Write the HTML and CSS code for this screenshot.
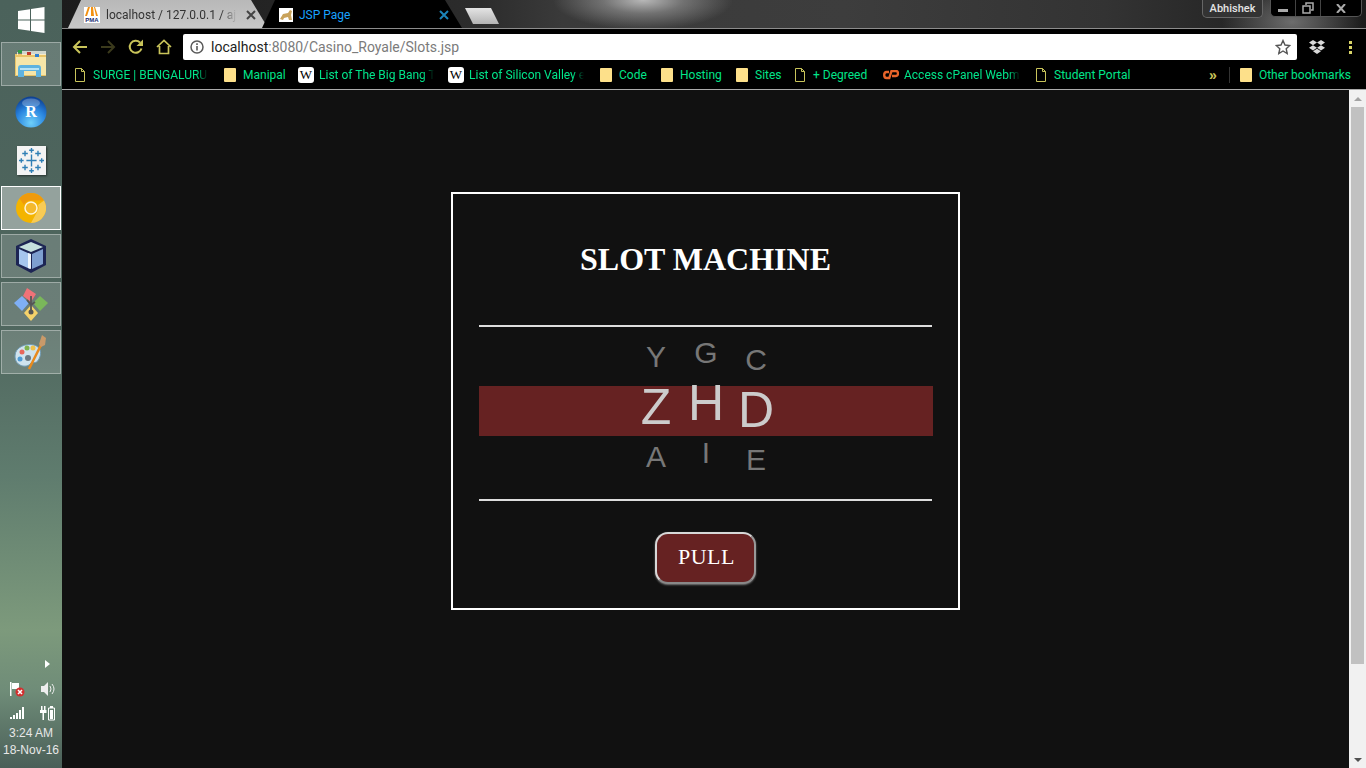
FILE: index.html
```html
<!DOCTYPE html>
<html lang="en">
<head>
<meta charset="utf-8">
<title>JSP Page</title>
<link rel="stylesheet" href="styles.css">
</head>
<body>
<aside class="taskbar">
  <div class="start">
    <svg width="27" height="26" viewBox="0 0 27 26"><path fill="#fff" d="M0 4 12 2.300V12.500H0ZM13 2.100 26.500 0V12.500H13ZM0 13.500H12V23.700L0 22ZM13 13.500H26.500V26L13 23.900Z"/></svg>
  </div>
  <div class="apps">
    <div class="app pinned">
      <svg width="34" height="30" viewBox="0 0 34 30"><path fill="#e9c467" d="M1 5h31v22H1z"/><path fill="#f7e6a8" d="M2 8h30v18H2z"/><path fill="#fdfdf2" d="M3 3h1v3H3zM8 2h24v4H8z" opacity=".7"/><path fill="#2f9e44" d="M4 1h4v3H4z"/><path fill="#c0392b" d="M13 3h4v3h-4z"/><path fill="#2f7fd0" d="M21 5h4v3h-4z"/><path fill="#5fb3e0" d="M4 26V19Q4 16 7 16H24Q27 16 27 19V28H22V22H10V28H4Z"/><path fill="#b8e3f5" d="M6 19h19v2H6z"/></svg>
    </div>
    <div class="app">
      <svg width="32" height="32" viewBox="0 0 32 32"><defs><radialGradient id="rb" cx=".5" cy=".85" r=".85"><stop offset="0" stop-color="#6fd0fa"/><stop offset=".55" stop-color="#2a86e0"/><stop offset="1" stop-color="#0c3d90"/></radialGradient></defs><circle cx="16" cy="16" r="15.500" fill="url(#rb)"/><ellipse cx="16" cy="7" rx="9" ry="4.500" fill="#fff" opacity=".25"/><text x="16" y="21" class="r-mark">R</text></svg>
    </div>
    <div class="app">
      <div class="tableau">
        <svg width="25" height="25" viewBox="0 0 27 27"><path stroke="#2f7fb5" stroke-width="1.500" fill="none" d="M13.500 7v13M8 13.500h11M13.500 0v5M11 2.500h5M13.500 22v5M11 24.500h5M0 13.500h5M2.500 11v5M22 13.500h5M24.500 11v5M6.500 3v6M3.500 6h6M20.500 3v6M17.500 6h6M6.500 18v6M3.500 21h6M20.500 18v6M17.500 21h6"/></svg>
      </div>
    </div>
    <div class="app active">
      <svg width="30" height="30" viewBox="0 0 30 30"><circle cx="15" cy="15" r="15" fill="#f4b400"/><path fill="#ef9a0c" d="M15 0A15 15 0 0 1 28 7.500H15A7.500 7.500 0 0 0 8 12L3.500 5.500A15 15 0 0 1 15 0Z"/><path fill="#f8cb55" d="M28 7.500A15 15 0 0 1 15 30L21 19A7 7 0 0 0 22 12Z"/><circle cx="15" cy="15" r="6" fill="#f4b92c" stroke="#fff6dc" stroke-width="1.500"/></svg>
    </div>
    <div class="app pinned">
      <svg width="32" height="34" viewBox="0 0 32 34"><path fill="#1d2554" d="M16 0 31 7V26L16 34 1 26V7Z"/><path fill="#c6e0de" d="M16 3 28 8 16 13 4 8Z"/><path fill="#a6c6ee" d="M4 10 15 15V30L4 25Z"/><path fill="#7e9fd0" d="M17 15 28 10V25L17 30Z"/><path fill="#eef5fb" d="M13 14 16 15V30L13 29Z"/></svg>
    </div>
    <div class="app pinned">
      <svg width="34" height="34" viewBox="0 0 34 34"><path fill="#ef7278" d="M13 1 22 7 17 15 9 9Z"/><path fill="#7faff5" d="M8 9 15 16 8 24 0 16Z"/><path fill="#7ab75a" d="M26 9 34 16 26 24 19 16Z"/><path fill="#f5d26a" d="M17 18 24 26 17 34 10 26Z"/><path fill="none" stroke="#555" stroke-width="1.800" d="M17 9V24M13 13 17 18 21 15"/><circle cx="17" cy="25" r="2.500" fill="#555"/></svg>
    </div>
    <div class="app pinned">
      <svg width="34" height="36" viewBox="0 0 34 36"><path fill="#cfe3ee" stroke="#6f9ab3" d="M1 22C1 13 12 9 20 11 27 13 28 19 25 25 22 31 18 27 16 30 13 34 1 33 1 22Z"/><circle cx="8" cy="18" r="2.500" fill="#e8665c"/><circle cx="13" cy="14" r="2.500" fill="#7fb34f"/><circle cx="19" cy="14" r="2.500" fill="#f0c24b"/><circle cx="14" cy="24" r="3" fill="#6b7a84"/><circle cx="6" cy="25" r="2.500" fill="#4f9bd6"/><path stroke="#e88a1e" stroke-width="2.500" d="M15 35 27 11"/><path fill="#c99a6a" d="M25 10 28 1 32 4 31 11 27 13Z"/></svg>
    </div>
  </div>
  <div class="tray">
    <div class="tray-arrow"></div>
    <div class="tray-row">
      <svg width="16" height="16" viewBox="0 0 16 16"><path fill="#fff" d="M1 1h1.500v14H1zM3 2h7v6H3z"/><circle cx="11" cy="11" r="4.500" fill="#d32f2f"/><path stroke="#fff" stroke-width="1.500" d="M9 9l4 4M13 9l-4 4"/></svg>
      <svg width="16" height="16" viewBox="0 0 16 16"><path fill="#eee" d="M1 5h3l4-4v14l-4-4H1z"/><path fill="none" stroke="#eee" d="M10 5q2 3 0 6M12 3q4 5 0 10"/></svg>
    </div>
    <div class="tray-row">
      <svg width="16" height="14" viewBox="0 0 16 14"><path fill="#fff" d="M1 11h2v2H1zM4 9h2v4H4zM7 7h2v6H7zM10 4h2v9h-2zM13 1h2v12h-2z"/></svg>
      <svg width="16" height="16" viewBox="0 0 16 16"><path fill="#fff" d="M1 1h1.500v4H1zM4 1h1.500v4H4zM0 5h6.500v3H0zM2.500 8h1.500v7H2.500z"/><path fill="none" stroke="#fff" d="M8.500 3h6v12h-6z"/><path fill="#fff" d="M10 1h3v2h-3zM10 5h3v9h-3z"/></svg>
    </div>
    <div class="clock">3:24 AM</div>
    <div class="clock">18-Nov-16</div>
  </div>
</aside>

<div class="browser">
  <header class="tabstrip">
    <div class="tab inactive">
      <svg class="favicon" width="16" height="16" viewBox="0 0 16 16"><path fill="#fff" d="M0 0h16v16H0z"/><path fill="#f29111" d="M4 0h2L3 9H1zM7 0h2l1 9H7zM11 0l3 9h-2L10 0z"/><text x="8" y="15" class="pma">PMA</text></svg>
      <span class="tab-title fade">localhost / 127.0.0.1 / ajp</span>
      <svg class="tab-x" width="10" height="10" viewBox="0 0 10 10"><path stroke="#444" stroke-width="2" d="M1 1l8 8M9 1l-8 8"/></svg>
    </div>
    <div class="tab current">
      <svg class="favicon" width="14" height="14" viewBox="0 0 14 14"><path fill="#fff" d="M0 0h14v14H0z"/><path fill="#c9a25a" d="M1 11 4 6 9 5 11 2 13 3 12 7 13 12H10L9 9 5 10 4 12Z"/></svg>
      <span class="tab-title">JSP Page</span>
      <svg class="tab-x" width="10" height="10" viewBox="0 0 10 10"><path stroke="#1b84b8" stroke-width="2" d="M1 1l8 8M9 1l-8 8"/></svg>
    </div>
    <div class="newtab"></div>
    <div class="window-area">
      <div class="profile">Abhishek</div>
      <div class="winbtns">
        <div class="winbtn min"><span class="min-bar"></span></div>
        <div class="winbtn max"><svg width="12" height="12" viewBox="0 0 12 12"><path fill="none" stroke="#aaa" stroke-width="1.500" d="M4 3V1h7v7H9M1 4h7v7H1z"/></svg></div>
        <div class="winbtn close"><svg width="10" height="9" viewBox="0 0 10 9"><path stroke="#aaa" stroke-width="2" d="M1 0l8 9M9 0l-8 9"/></svg></div>
      </div>
    </div>
  </header>

  <nav class="toolbar">
    <svg class="nav-ic" width="16" height="16" viewBox="0 0 16 16"><path fill="none" stroke="#c9c45a" stroke-width="2" d="M15 8H2M8 2 2 8l6 6"/></svg>
    <svg class="nav-ic" width="16" height="16" viewBox="0 0 16 16"><path fill="none" stroke="#3b3a1c" stroke-width="2" d="M1 8h13M8 2l6 6-6 6"/></svg>
    <svg class="nav-ic" width="16" height="16" viewBox="0 0 16 16"><path fill="none" stroke="#c9c45a" stroke-width="2" d="M13.500 9.500A6 6 0 1 1 12 3.500"/><path fill="#c9c45a" d="M15 0.500V7H8.500Z"/></svg>
    <svg class="nav-ic" width="16" height="16" viewBox="0 0 16 16"><path fill="none" stroke="#c9c45a" stroke-width="1.700" d="M1 8 8 1.500 15 8M3.500 7v7.500h9V7"/></svg>
    <div class="omnibox">
      <svg width="14" height="14" viewBox="0 0 14 14"><circle cx="7" cy="7" r="6" fill="none" stroke="#5a5a5a" stroke-width="1.500"/><path fill="#5a5a5a" d="M6.200 6h1.600v4.500H6.200zM6.200 3.300h1.600v1.600H6.200z"/></svg>
      <span class="url"><span class="host">localhost</span>:8080/Casino_Royale/Slots.jsp</span>
      <svg class="star" width="16" height="16" viewBox="0 0 16 16"><path fill="none" stroke="#555" stroke-width="1.400" d="M8 1.500 10 6l4.800.5-3.600 3.200 1 4.800L8 12l-4.200 2.500 1-4.800L1.200 6.500 6 6Z"/></svg>
    </div>
    <svg class="dropbox" width="16" height="15" viewBox="0 0 16 15"><path fill="#d8d8d8" d="M4 0 8 2.600 4 5.200 0 2.600ZM12 0l4 2.600-4 2.600-4-2.600ZM0 7.800l4-2.600 4 2.600-4 2.600ZM16 7.800l-4-2.600-4 2.600 4 2.600ZM4 11.300 8 8.700l4 2.600-4 2.700Z"/></svg>
    <div class="menu-dots"><i></i><i></i><i></i></div>
  </nav>

  <nav class="bookmarks">
    <div class="bm w-surge"><svg class="page" width="10" height="14" viewBox="0 0 10 14"><path fill="none" stroke="#c9c45a" d="M.5.500h6l3 3v10h-9zM6.500.500v3h3"/></svg><span class="bm-text fade-sm">SURGE | BENGALURU,</span></div>
    <div class="bm w-manipal"><span class="folder"></span><span class="bm-text">Manipal</span></div>
    <div class="bm w-wiki1"><span class="wiki">W</span><span class="bm-text fade-sm">List of The Big Bang Th</span></div>
    <div class="bm w-wiki2"><span class="wiki">W</span><span class="bm-text fade-sm">List of Silicon Valley eq</span></div>
    <div class="bm w-code"><span class="folder"></span><span class="bm-text">Code</span></div>
    <div class="bm w-hosting"><span class="folder"></span><span class="bm-text">Hosting</span></div>
    <div class="bm w-sites"><span class="folder"></span><span class="bm-text">Sites</span></div>
    <div class="bm w-degreed"><svg class="page" width="10" height="14" viewBox="0 0 10 14"><path fill="none" stroke="#c9c45a" d="M.5.500h6l3 3v10h-9zM6.500.500v3h3"/></svg><span class="bm-text">+ Degreed</span></div>
    <div class="bm w-cpanel"><svg width="16" height="10" viewBox="0 0 16 10"><path fill="none" stroke="#e8642a" stroke-width="2.400" d="M6 2H3.500Q1.200 2 1.200 5T3.500 8H6M6 9 8.500 1H13Q15 1 15 3.500T13 6H9"/></svg><span class="bm-text fade-sm">Access cPanel Webma</span></div>
    <div class="bm"><svg class="page" width="10" height="14" viewBox="0 0 10 14"><path fill="none" stroke="#c9c45a" d="M.5.500h6l3 3v10h-9zM6.500.500v3h3"/></svg><span class="bm-text">Student Portal</span></div>
    <div class="bm-end">
      <span class="chev">»</span>
      <span class="bm-sep"></span>
      <div class="bm"><span class="folder"></span><span class="bm-text">Other bookmarks</span></div>
    </div>
  </nav>

  <div class="viewport">
    <main class="page-area">
      <section class="machine">
        <h1 class="title">SLOT MACHINE</h1>
        <hr class="rule">
        <div class="slots">
          <div class="band"></div>
          <div class="reels">
            <div class="reel r1"><span>Y</span><span class="big">Z</span><span>A</span></div>
            <div class="reel r2"><span>G</span><span class="big">H</span><span>I</span></div>
            <div class="reel r3"><span>C</span><span class="big">D</span><span>E</span></div>
          </div>
        </div>
        <hr class="rule">
        <div class="pull-wrap"><button class="pull" type="button">PULL</button></div>
      </section>
    </main>
    <div class="scrollbar">
      <div class="sb-arrow up"></div>
      <div class="sb-thumb"></div>
      <div class="sb-rest"></div>
      <div class="sb-arrow down"></div>
    </div>
  </div>
</div>
</body>
</html>
```

FILE: styles.css
```css
* { box-sizing: border-box; }
html, body { margin: 0; height: 100%; overflow: hidden; }
body {
  display: flex;
  width: 1366px;
  height: 768px;
  background: #111;
  font-family: Roboto, "Liberation Sans", Arial, sans-serif;
}

/* Windows taskbar */
.taskbar {
  width: 62px;
  flex: none;
  display: flex;
  flex-direction: column;
  background: linear-gradient(180deg, #4b625b 0, #4f665e 42%, #5f7c6e 62%, #7d9a7c 82%, #6f8c78 90%, #4a5f58 100%);
}
.start { height: 42px; display: flex; align-items: center; justify-content: center; padding: 0 0 3px 1px; }
.apps { display: flex; flex-direction: column; padding-left: 1px; gap: 4px; }
.app {
  width: 60px; height: 44px;
  display: flex; align-items: center; justify-content: center;
  border: 1px solid transparent;
}
.app.pinned { background: rgba(255,255,255,.16); border-color: rgba(255,255,255,.35); }
.app.active { background: rgba(255,255,255,.4); border-color: #fff; }
.r-mark { font: bold 16px "Liberation Serif", serif; fill: #fff; text-anchor: middle; }
.tableau { width: 29px; height: 29px; background: #f3f3f3; display: flex; align-items: center; justify-content: center; box-shadow: 1px 1px 2px rgba(0,0,0,.5); }
.tray { margin-top: auto; display: flex; flex-direction: column; align-items: center; padding-bottom: 9px; }
.tray-arrow { width: 0; height: 0; border-left: 5px solid #fff; border-top: 4px solid transparent; border-bottom: 4px solid transparent; margin: 0 0 9px 33px; }
.tray-row { display: flex; gap: 15px; align-items: center; height: 24px; padding-left: 2px; }
.clock { font: 12px/17px "Liberation Sans", Arial, sans-serif; color: #e8e8e8; height: 17px; white-space: nowrap; }

/* Chrome */
.browser { flex: 1; min-width: 0; display: flex; flex-direction: column; }
.tabstrip {
  height: 29px; flex: none;
  display: flex; align-items: flex-end;
  padding-left: 6px;
  border-bottom: 1px solid #8c8c8c;
  background:
    radial-gradient(ellipse 90px 30px at 581px 0, #b8b8b8 0, rgba(150,150,150,.6) 45%, rgba(70,70,70,0) 100%),
    radial-gradient(ellipse 70px 40px at 1230px 22px, rgba(170,170,170,.55) 0, rgba(60,60,60,0) 100%),
    linear-gradient(90deg, #1c1c1c 0, #2c2c2c 420px, #3a3a3a 500px, #3d3d3d 60%, #333 80%, #262626 90%, #1c1c1c 100%);
}
.tab {
  width: 200px; height: 28px; flex: none;
  display: flex; align-items: center;
  clip-path: polygon(0 100%, 13px 0, 183px 0, 200px 100%);
  font-size: 12px;
  white-space: nowrap;
}
.tab.inactive { background: linear-gradient(#b8b8b8, #c8c8c8); color: #333; padding: 1px 12px 0 16px; }
.tab.current { background: #000; color: #19a3ff; margin-left: -6px; padding: 1px 13px 0 17px; }
.favicon { flex: none; margin-right: 6px; }
.pma { font: bold 6px "Liberation Sans", sans-serif; fill: #1b2b70; text-anchor: middle; }
.tab-title { flex: 1; min-width: 0; overflow: hidden; }
.tab-title.fade { -webkit-mask-image: linear-gradient(90deg, #000 88%, transparent); mask-image: linear-gradient(90deg, #000 88%, transparent); }
.tab-x { flex: none; margin-left: 9px; }
.newtab {
  width: 34px; height: 16px; margin: 0 0 4px 3px; flex: none;
  background: linear-gradient(#e4e4e4, #b4b4b4);
  clip-path: polygon(0 0, 26px 0, 34px 100%, 8px 100%);
}
.window-area { margin-left: auto; align-self: flex-start; display: flex; align-items: flex-start; gap: 7px; padding-right: 4px; }
.profile {
  width: 61px; height: 18px;
  font-size: 11px; font-weight: 500; color: #e4e4e4; text-align: center; line-height: 18px;
  background: #333; border: 1px solid #666; border-top: 0; border-radius: 0 0 5px 5px;
}
.winbtns { display: flex; height: 17px; background: #000; border: 1px solid #555; border-top: 0; border-radius: 0 0 5px 5px; }
.winbtn { display: flex; align-items: center; justify-content: center; height: 100%; border-right: 1px solid #444; }
.winbtn:last-child { border-right: 0; }
.min { width: 25px; }
.min-bar { width: 10px; height: 3px; background: #aaa; margin-top: 5px; }
.max { width: 25px; }
.close { width: 40px; }

.toolbar {
  height: 31px; flex: none;
  display: flex; align-items: center;
  background: #000;
  padding: 5px 0 0 10px;
}
.nav-ic { flex: none; margin-right: 12px; }
.nav-ic:nth-child(4) { margin-right: 11px; }
.omnibox {
  flex: none; width: 1114px; height: 26px;
  background: #fff; border-radius: 2px;
  display: flex; align-items: center;
  padding: 0 6px 0 7px;
}
.url { margin-left: 7px; font-size: 14px; color: #7b7b7b; white-space: nowrap; }
.host { color: #222; }
.star { margin-left: auto; }
.dropbox { margin-left: 12px; flex: none; }
.menu-dots { margin-left: 24px; display: flex; flex-direction: column; gap: 2px; }
.menu-dots i { width: 3px; height: 3px; background: #d8d468; display: block; }

.bookmarks {
  height: 30px; flex: none;
  display: flex; align-items: center;
  background: #000;
  border-bottom: 1px solid #aaa;
  padding: 1px 0 0 13px;
}
.bm { display: flex; align-items: center; gap: 8px; white-space: nowrap; flex: none; }
.bm-text { font-size: 12px; color: #00e58a; }
.w-surge { width: 149px; }
.w-manipal { width: 74px; }
.w-wiki1 { width: 150px; gap: 5px; }
.w-wiki2 { width: 152px; gap: 5px; }
.w-code { width: 61px; }
.w-hosting { width: 75px; }
.w-sites { width: 59px; }
.w-degreed { width: 88px; }
.w-cpanel { width: 153px; gap: 5px; }
.w-surge .bm-text { width: 115px; overflow: hidden; }
.w-wiki1 .bm-text { width: 115px; overflow: hidden; }
.w-wiki2 .bm-text { width: 115px; overflow: hidden; }
.w-cpanel .bm-text { width: 116px; overflow: hidden; }
.fade-sm { -webkit-mask-image: linear-gradient(90deg, #000 90%, transparent); mask-image: linear-gradient(90deg, #000 90%, transparent); }
.page { flex: none; }
.folder { width: 12px; height: 14px; background: #fde08a; border-radius: 1px; flex: none; margin-right: -1px; }
.wiki { width: 16px; height: 16px; background: #fff; color: #000; border-radius: 3px; font: 13px/16px "Liberation Serif", serif; text-align: center; flex: none; }
.bm-end { margin-left: auto; display: flex; align-items: center; gap: 10px; padding-right: 15px; }
.chev { color: #c9c45a; font: bold 14px/14px "Liberation Sans", sans-serif; margin-right: 2px; }
.bm-sep { width: 1px; height: 16px; background: #333; }

/* Page */
.viewport { flex: 1; min-height: 0; display: flex; }
.page-area { flex: 1; min-width: 0; background: #111; padding-top: 102px; display: flex; justify-content: center; align-items: flex-start; }
.machine {
  width: 509px; height: 418px;
  border: 2px solid #fff;
  padding: 0 26px;
  display: flex; flex-direction: column;
}
.title {
  margin: 47px 0 0;
  height: 84px;
  font: bold 32px/37px "Liberation Serif", "Times New Roman", serif;
  color: #fff; text-align: center;
}
.rule { margin: 0; height: 2px; width: 453px; border: 0; background: #ddd; flex: none; }
.slots { position: relative; height: 172px; width: 454px; flex: none; }
.band { position: absolute; left: 0; right: 0; top: 59px; height: 50px; background: #662222; }
.reels { position: relative; display: flex; justify-content: center; height: 100%; }
.reel { width: 50px; display: flex; flex-direction: column; align-items: center; }
.reel span { display: block; height: 50px; font: 30px/50px "Liberation Sans", Arial, sans-serif; color: #777; text-align: center; }
.reel span.big { font-size: 50px; color: #ccc; }
.r1 { padding-top: 5px; }
.r2 { padding-top: 1px; }
.r3 { padding-top: 8px; }
.pull-wrap { display: flex; justify-content: center; padding-top: 31px; }
.pull {
  width: 101px; height: 52px;
  font: 22px "Liberation Serif", serif;
  letter-spacing: .5px;
  color: #fff;
  background: #662222;
  border: 2px solid #d8d8d8;
  border-radius: 13px;
  border-right-color: #999;
  border-bottom-color: #888;
  box-shadow: 0 1px 2px #777;
  padding: 0 0 2px 2px;
}

.scrollbar { width: 17px; flex: none; background: #f1f1f1; display: flex; flex-direction: column; }
.sb-arrow { height: 17px; flex: none; display: flex; align-items: center; justify-content: center; }
.sb-arrow.up::before { content: ""; border-left: 4px solid transparent; border-right: 4px solid transparent; border-bottom: 4px solid #a3a3a3; }
.sb-arrow.down::before { content: ""; border-left: 4px solid transparent; border-right: 4px solid transparent; border-top: 4px solid #505050; }
.sb-thumb { height: 557px; flex: none; margin: 0 2px; background: #c1c1c1; }
.sb-rest { flex: 1; }
```
